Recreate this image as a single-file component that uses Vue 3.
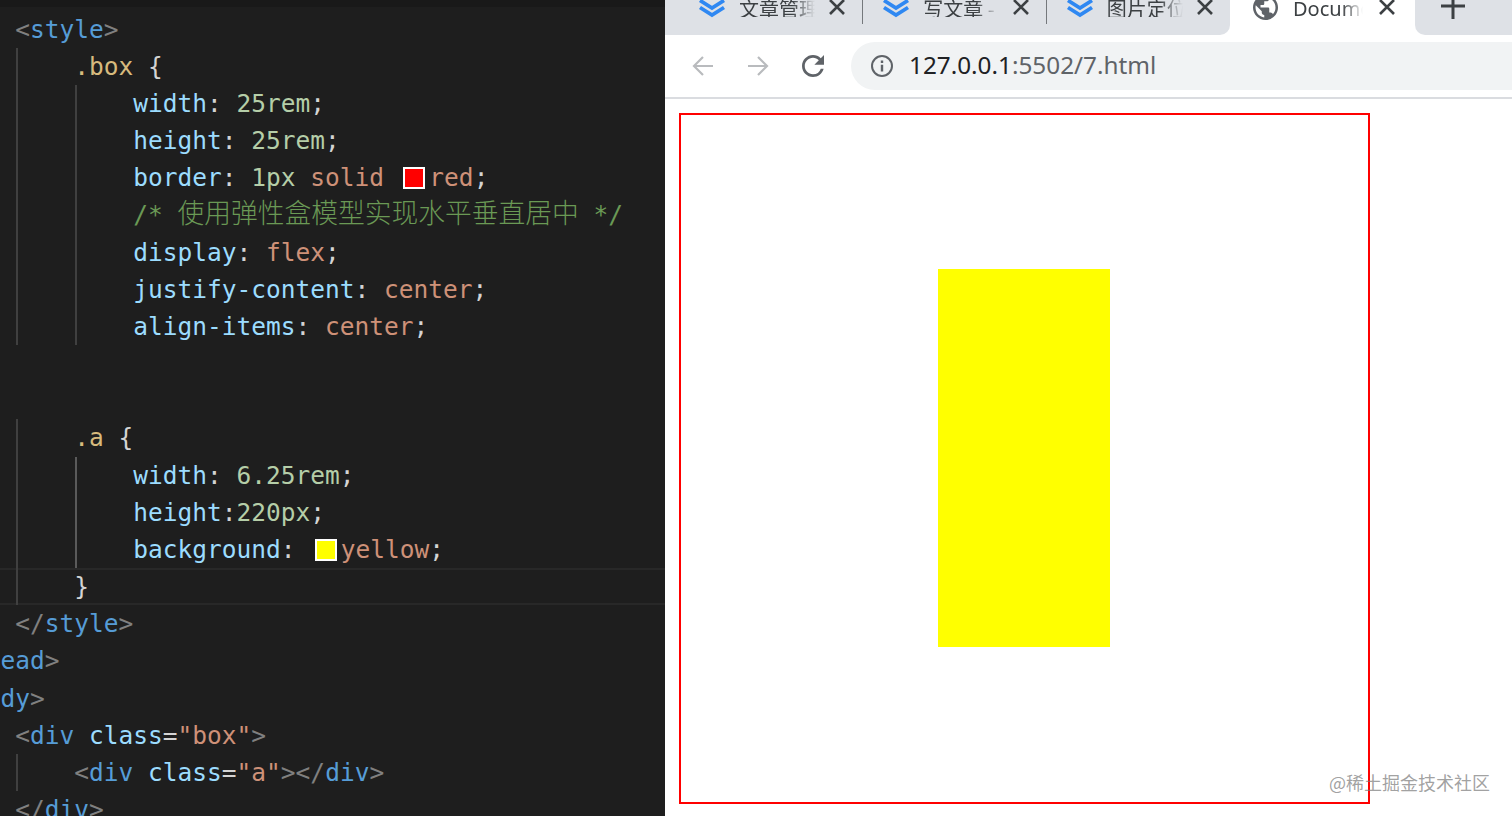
<script setup>
const line = (t, g = [], extra = '') => ({ t, g, extra })
const p = (x) => ['pu', x]
const tag = (x) => ['tg', x]
const pr = (x) => ['pr', x]
const v = (x) => ['va', x]
const n = (x) => ['nu', x]
const s = (x) => ['sl', x]
const w = (x) => ['tx', x]

const lines = [
  line([w(' '), p('<'), tag('style'), p('>')]),
  line([w('     '), s('.box'), w(' {')], ['g-outer']),
  line([w('         '), pr('width'), w(': '), n('25rem'), w(';')], ['g-outer', 'g-inner']),
  line([w('         '), pr('height'), w(': '), n('25rem'), w(';')], ['g-outer', 'g-inner']),
  line([w('         '), pr('border'), w(': '), n('1px'), w(' '), v('solid'), w(' '), ['sw red', ''], v('red'), w(';')], ['g-outer', 'g-inner']),
  line([w('         '), ['cm', '/* '], ['cm cjk', '使用弹性盒模型实现水平垂直居中'], ['cm', ' */']], ['g-outer', 'g-inner']),
  line([w('         '), pr('display'), w(': '), v('flex'), w(';')], ['g-outer', 'g-inner']),
  line([w('         '), pr('justify-content'), w(': '), v('center'), w(';')], ['g-outer', 'g-inner']),
  line([w('         '), pr('align-items'), w(': '), v('center'), w(';')], ['g-outer', 'g-inner']),
  line([]),
  line([]),
  line([w('     '), s('.a'), w(' {')], ['g-outer']),
  line([w('         '), pr('width'), w(': '), n('6.25rem'), w(';')], ['g-outer', 'g-active']),
  line([w('         '), pr('height'), w(':'), n('220px'), w(';')], ['g-outer', 'g-active']),
  line([w('         '), pr('background'), w(': '), ['sw yellow', ''], v('yellow'), w(';')], ['g-outer', 'g-active']),
  line([w('     }')], ['g-outer'], 'current'),
  line([w(' '), p('</'), tag('style'), p('>')]),
  line([tag('ead'), p('>')]),
  line([tag('dy'), p('>')]),
  line([w(' '), p('<'), tag('div'), w(' '), pr('class'), w('='), v('"box"'), p('>')]),
  line([w('     '), p('<'), tag('div'), w(' '), pr('class'), w('='), v('"a"'), p('></'), tag('div'), p('>')], ['g-outer']),
  line([w(' '), p('</'), tag('div'), p('>')]),
]

const tabs = [
  { label: '文章管理', first: true },
  { label: '写文章 -' },
  { label: '图片定位' },
]
</script>

<template>
  <div class="page">
    <section class="editor">
      <div class="editor-top"></div>
      <div class="code">
        <div v-for="(l, i) in lines" :key="i" class="line" :class="l.extra">
          <i v-for="g in l.g" :key="g" class="guide" :class="g"></i>
          <span v-for="(tok, j) in l.t" :key="j" :class="tok[0]">{{ tok[1] }}</span>
        </div>
      </div>
    </section>

    <section class="browser">
      <header class="strip">
        <div class="strip-left">
          <div v-for="tab in tabs" :key="tab.label" class="tab sep" :class="{ first: tab.first }">
            <svg class="chev" viewBox="0 0 28 18">
              <path d="M2 0.5 14 8 26 0.5M2 7.5 14 15 26 7.5" fill="none" stroke="#2f88f2" stroke-width="3.8" />
            </svg>
            <span class="tab-label">{{ tab.label }}</span>
            <svg class="close" viewBox="0 0 16 16">
              <path d="M1 0 15 14M15 0 1 14" fill="none" stroke="#3c4043" stroke-width="2.6" />
            </svg>
          </div>
        </div>
        <div class="tab active">
          <svg class="globe" viewBox="2 2 20 20">
            <path fill="#5f6368" d="M12 2C6.48 2 2 6.48 2 12s4.48 10 10 10 10-4.48 10-10S17.52 2 12 2zm-1 17.93c-3.95-.49-7-3.85-7-7.93 0-.62.08-1.21.21-1.79L9 15v1c0 1.1.9 2 2 2v1.93zm6.9-2.54c-.26-.81-1-1.39-1.9-1.39h-1v-3c0-.55-.45-1-1-1H8v-2h2c.55 0 1-.45 1-1V7h2c1.1 0 2-.9 2-2v-.41c2.93 1.19 5 4.06 5 7.41 0 2.08-.8 3.97-2.1 5.39z" />
          </svg>
          <span class="tab-label doc">Document</span>
          <svg class="close" viewBox="0 0 16 16">
            <path d="M1 0 15 14M15 0 1 14" fill="none" stroke="#3c4043" stroke-width="2.6" />
          </svg>
        </div>
        <div class="strip-right">
          <svg class="plus" viewBox="0 0 24 24">
            <path d="M12 0V24M0 11H24" fill="none" stroke="#3c4043" stroke-width="3" />
          </svg>
        </div>
      </header>

      <div class="toolbar">
        <svg class="nav" viewBox="0 0 22 22">
          <path d="M21 11H2M11 2 2 11 11 20" fill="none" stroke="#b9bbbe" stroke-width="2.2" />
        </svg>
        <svg class="nav" viewBox="0 0 22 22">
          <path d="M1 11H20M11 2 20 11 11 20" fill="none" stroke="#b9bbbe" stroke-width="2.2" />
        </svg>
        <svg class="nav" viewBox="4 4 16 16">
          <path fill="#5f6368" d="M17.65 6.35A7.958 7.958 0 0 0 12 4c-4.42 0-7.99 3.58-7.99 8s3.57 8 7.99 8c3.73 0 6.84-2.55 7.73-6h-2.08A5.99 5.99 0 0 1 12 18c-3.31 0-6-2.69-6-6s2.69-6 6-6c1.66 0 3.14.69 4.22 1.78L13 11h7V4l-2.35 2.35z" />
        </svg>
        <div class="omnibox">
          <svg class="info" viewBox="0 0 22 22">
            <circle cx="11" cy="11" r="10" fill="none" stroke="#5f6368" stroke-width="2" />
            <path d="M9.8 5.5h2.4v2.4H9.8zM9.8 9.8h2.4v6.7H9.8z" fill="#5f6368" />
          </svg>
          <span class="url"><b>127.0.0.1</b>:5502/7.html</span>
        </div>
      </div>

      <main class="viewport">
        <div class="box">
          <div class="a"></div>
        </div>
      </main>
    </section>

    <div class="watermark">@稀土掘金技术社区</div>
  </div>
</template>

<style>
html, body { margin: 0; background: #fff; overflow: hidden; }
</style>

<style scoped>
.page {
  position: relative;
  display: flex;
  width: 1512px;
  height: 816px;
  overflow: hidden;
}
.editor {
  width: 665px;
  flex: none;
  background: #1e1e1e;
  overflow: hidden;
}
.editor-top { height: 7px; background: #191919; }
.code {
  padding: 3.5px 0 0 0.5px;
  font-family: "DejaVu Sans Mono", "Noto Sans CJK SC", monospace;
  font-size: 24.5px;
  color: #d4d4d4;
}
.line {
  position: relative;
  height: 37.18px;
  line-height: 37.18px;
  white-space: pre;
}
.current::before {
  content: "";
  position: absolute;
  left: -2px;
  right: 0;
  top: 0;
  bottom: 0;
  border-top: 2px solid #282828;
  border-bottom: 2px solid #282828;
}
.guide {
  position: absolute;
  top: 0;
  bottom: 0;
  width: 2px;
}
.g-outer { left: 15.5px; background: #404040; }
.g-inner { left: 74.3px; background: #404040; }
.g-active { left: 74.3px; background: #5a5a5a; }
.pu { color: #808080; }
.tg { color: #569cd6; }
.pr { color: #9cdcfe; }
.va { color: #ce9178; }
.nu { color: #b5cea8; }
.sl { color: #d7ba7d; }
.tx { color: #d4d4d4; }
.cm { color: #6a9955; }
.cjk {
  font-family: "Noto Sans CJK SC", sans-serif;
  font-size: 26.75px;
  font-weight: 300;
  line-height: 1;
}
.sw {
  display: inline-block;
  box-sizing: border-box;
  width: 22px;
  height: 22px;
  margin: 0 4px 0 4.5px;
  border: 2px solid #fff;
  vertical-align: -3px;
}
.red { background: #f00; }
.yellow { background: #ff0; }

.browser {
  flex: 1;
  min-width: 0;
  display: flex;
  flex-direction: column;
  background: #fff;
}
.strip {
  display: flex;
  height: 35px;
  flex: none;
  font-family: "Noto Sans CJK SC", "Noto Sans", sans-serif;
  color: #3c4043;
}
.strip-left {
  display: flex;
  width: 565px;
  flex: none;
  background: #dee1e6;
  border-bottom-right-radius: 10px;
}
.strip-right {
  flex: 1;
  background: #dee1e6;
  border-bottom-left-radius: 10px;
  padding-left: 26px;
}
.tab {
  position: relative;
  display: flex;
  align-items: flex-start;
  width: 184px;
  box-sizing: border-box;
  padding-left: 19px;
}
.tab.first { width: 199px; padding-left: 33px; }
.sep::after {
  content: "";
  position: absolute;
  right: 0;
  top: 0;
  width: 1px;
  height: 24px;
  background: #75787c;
}
.strip-left .tab:last-child::after { display: none; }
.chev { width: 28px; height: 18px; flex: none; }
.tab-label {
  width: 76px;
  margin-left: 13px;
  font-size: 20px;
  line-height: 17px;
  white-space: nowrap;
  overflow: hidden;
  -webkit-mask-image: linear-gradient(to right, #000 70%, transparent 100%);
  mask-image: linear-gradient(to right, #000 70%, transparent 100%);
}
.close { width: 16px; height: 16px; flex: none; margin-left: 14px; }
.active { width: 185px; padding-left: 23px; background: #fff; }
.globe { width: 25px; height: 25px; flex: none; margin-top: -5px; }
.doc {
  width: 70px;
  margin-left: 15px;
  margin-right: 2px;
  font-family: "Noto Sans", sans-serif;
  font-size: 20px;
  line-height: 17px;
}
.plus { display: block; width: 24px; height: 24px; margin-top: -5px; }

.toolbar {
  display: flex;
  align-items: center;
  height: 62px;
  flex: none;
  padding-left: 27px;
  border-bottom: 2px solid #dadce0;
}
.nav { width: 22px; height: 22px; flex: none; margin-right: 33px; }
.nav:nth-child(3) { margin-right: 27px; }
.omnibox {
  flex: 1;
  height: 48px;
  display: flex;
  align-items: center;
  padding-left: 20px;
  background: #f1f3f4;
  border-radius: 24px 0 0 24px;
}
.info { width: 22px; height: 22px; flex: none; margin-right: 16px; }
.url {
  font-family: "Noto Sans", sans-serif;
  font-size: 24.3px;
  line-height: 30px;
  padding-bottom: 2px;
  color: #5f6368;
  white-space: nowrap;
}
.url b { font-weight: 400; color: #202124; }

.viewport {
  flex: 1;
  min-height: 0;
  padding: 14px 0 0 14px;
}
.box {
  box-sizing: border-box;
  width: 691px;
  height: 691px;
  padding: 0 1px 1px 0;
  border: 2px solid #f00;
  display: flex;
  justify-content: center;
  align-items: center;
}
.a { width: 172px; height: 378px; background: #ff0; }

.watermark {
  position: absolute;
  right: 22px;
  bottom: 21px;
  font-family: "Noto Sans CJK SC", sans-serif;
  font-size: 18px;
  line-height: 26px;
  color: rgba(120, 120, 120, 0.7);
}
</style>
